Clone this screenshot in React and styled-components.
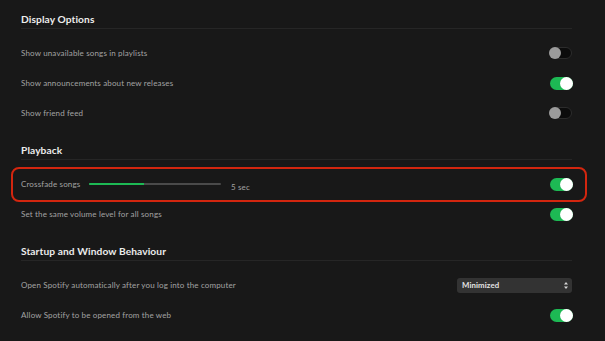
import React from "react"
import styled, { createGlobalStyle } from "styled-components"

const GlobalStyle = createGlobalStyle`
  html, body {
    margin: 0;
    padding: 0;
    background: #181818;
  }
  body {
    font-family: "Lato", "Noto Sans", sans-serif;
    -webkit-font-smoothing: antialiased;
  }
`

const Page = styled.div`
  width: 605px;
  height: 341px;
  overflow: hidden;
  background: #181818;
  padding: 10px 0 0 21px;
  box-sizing: border-box;
`

const Section = styled.section`
  width: 551px;
  margin-bottom: 13px;
`

const Heading = styled.h2`
  margin: 0;
  height: 18px;
  line-height: 18px;
  font-size: 10.2px;
  font-weight: 700;
  color: #ececec;
  letter-spacing: 0.1px;
  border-bottom: 1px solid #262626;
`

const Rows = styled.div`
  padding-top: 9px;
  display: flex;
  flex-direction: column;
`

const Row = styled.div`
  position: relative;
  height: 30px;
  display: flex;
  align-items: center;
  justify-content: space-between;

  ${({ $highlight }) =>
    $highlight &&
    `
    &::after {
      content: "";
      position: absolute;
      top: -2px;
      bottom: -3px;
      left: -10px;
      right: -15px;
      border: 2px solid #d3260f;
      border-radius: 8px;
      pointer-events: none;
    }
  `}
`

const Label = styled.span`
  font-size: 8px;
  color: #a3a3a3;
  letter-spacing: 0.15px;
  ${({ $width }) => $width && `width: ${$width}px; flex-shrink: 0;`}
`

const Left = styled.div`
  display: flex;
  align-items: center;
`

const Track = styled.div`
  width: 132px;
  height: 2px;
  border-radius: 1px;
  background: #4a4a4a;
  overflow: hidden;
`

const Fill = styled.div`
  height: 100%;
  background: #1db954;
`

const Value = styled.span`
  margin-left: 10px;
  margin-top: 6px;
  font-size: 8px;
  color: #a3a3a3;
  letter-spacing: 0.15px;
`

const Switch = styled.span`
  position: relative;
  box-sizing: border-box;
  display: inline-block;
  width: 23px;
  height: ${({ $on }) => ($on ? 13 : 12)}px;
  margin-right: ${({ $on }) => ($on ? -1 : 0)}px;
  border-radius: 7px;
  background: ${({ $on }) => ($on ? "#1db954" : "#0c0c0c")};
  border: ${({ $on }) => ($on ? "none" : "1px solid #2c2c2c")};

  &::after {
    content: "";
    position: absolute;
    top: ${({ $on }) => ($on ? 0 : -1)}px;
    ${({ $on }) => ($on ? "right: 0;" : "left: -1px;")}
    width: ${({ $on }) => ($on ? 13 : 12)}px;
    height: ${({ $on }) => ($on ? 13 : 12)}px;
    border-radius: 50%;
    background: ${({ $on }) => ($on ? "#ffffff" : "#9b9b9b")};
  }
`

const Select = styled.div`
  width: 115px;
  height: 15px;
  box-sizing: border-box;
  padding: 0 4px 0 5px;
  border-radius: 3px;
  background: #333333;
  display: flex;
  align-items: center;
  justify-content: space-between;
  font-size: 7.8px;
  font-weight: 700;
  color: #e4e4e4;
  letter-spacing: 0.1px;
`

const Arrows = () => (
  <svg width="4" height="7" viewBox="0 0 4 7">
    <path d="M2 0 L4 2.6 H0 Z M2 7 L4 4.4 H0 Z" fill="#d8d8d8" />
  </svg>
)

const sections = [
  {
    title: "Display Options",
    rows: [
      { label: "Show unavailable songs in playlists", on: false },
      { label: "Show announcements about new releases", on: true },
      { label: "Show friend feed", on: false },
    ],
  },
]

const App = () => (
  <>
    <GlobalStyle />
    <Page>
      {sections.map(s => (
        <Section key={s.title}>
          <Heading>{s.title}</Heading>
          <Rows>
            {s.rows.map(r => (
              <Row key={r.label}>
                <Label>{r.label}</Label>
                <Switch $on={r.on} />
              </Row>
            ))}
          </Rows>
        </Section>
      ))}

      <Section>
        <Heading>Playback</Heading>
        <Rows>
          <Row $highlight>
            <Left>
              <Label $width={68}>Crossfade songs</Label>
              <Track>
                <Fill style={{ width: `${(5 / 12) * 100}%` }} />
              </Track>
              <Value>5 sec</Value>
            </Left>
            <Switch $on />
          </Row>
          <Row>
            <Label>Set the same volume level for all songs</Label>
            <Switch $on />
          </Row>
        </Rows>
      </Section>

      <Section>
        <Heading>Startup and Window Behaviour</Heading>
        <Rows>
          <Row>
            <Label>Open Spotify automatically after you log into the computer</Label>
            <Select>
              Minimized
              <Arrows />
            </Select>
          </Row>
          <Row>
            <Label>Allow Spotify to be opened from the web</Label>
            <Switch $on />
          </Row>
        </Rows>
      </Section>
    </Page>
  </>
)

export default App
